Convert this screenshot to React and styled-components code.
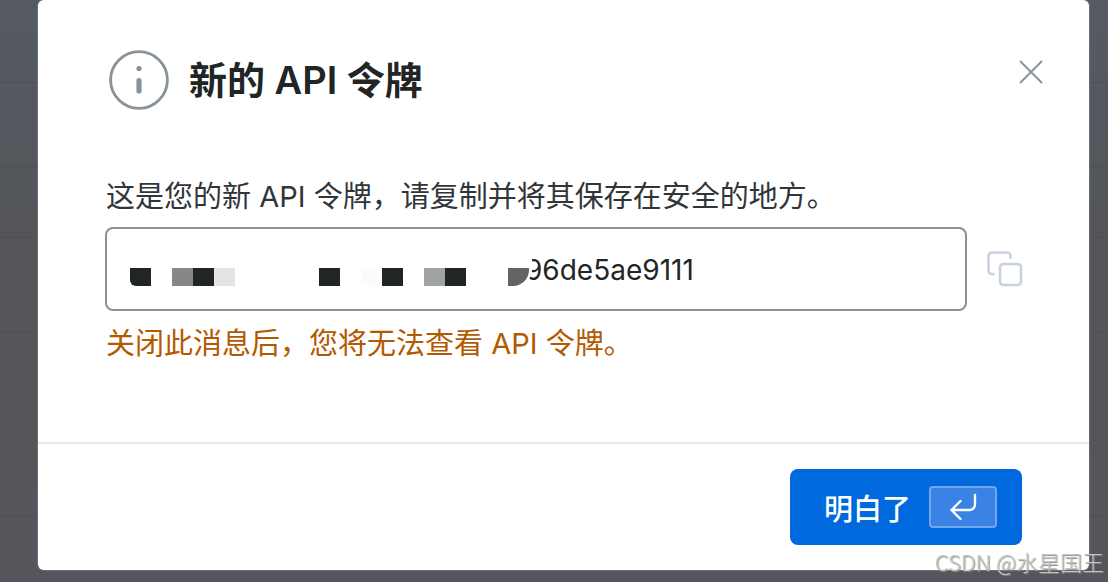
import React, { useState } from "react";
import styled, { createGlobalStyle } from "styled-components";

const rows = [83, 84, 71, 95, 183];

const blocks = [
  { col: 1, color: "#212526" },
  { col: 3, color: "#868887" },
  { col: 4, color: "#212526" },
  { col: 5, color: "#e4e4e4" },
  { col: 10, color: "#212526" },
  { col: 12, color: "#fbfbfb" },
  { col: 13, color: "#212526" },
  { col: 15, color: "#a0a3a4" },
  { col: 16, color: "#212526" },
  { col: 19, color: "#626466" },
];

function App() {
  const [open, setOpen] = useState(true);
  const token = "96de5ae9111";

  const copyToken = () => {
    navigator.clipboard?.writeText(token);
  };

  return (
    <Page>
      <GlobalStyle />
      <Backdrop aria-hidden="true">
        {rows.map((height, i) => (
          <BackdropRow key={i} $height={height} />
        ))}
      </Backdrop>
      {open && (
        <Dialog role="dialog" aria-labelledby="dialog-title">
          <Body>
            <Header>
              <InfoIcon viewBox="0 0 60 60" aria-hidden="true">
                <circle cx="30" cy="30" r="28.4" fill="none" stroke="#87929a" strokeWidth="2.8" />
                <circle cx="30" cy="18.5" r="2.6" fill="#87929a" />
                <path d="M30 30.5v10.5" stroke="#87929a" strokeWidth="5.2" strokeLinecap="round" />
              </InfoIcon>
              <Title id="dialog-title">新的 API 令牌</Title>
              <CloseButton aria-label="关闭" onClick={() => setOpen(false)}>
                <svg width="24" height="24" viewBox="0 0 24 24" aria-hidden="true">
                  <path d="M1.5 1.5l21 21M22.5 1.5l-21 21" stroke="#87929a" strokeWidth="1.8" strokeLinecap="round" />
                </svg>
              </CloseButton>
            </Header>
            <Label htmlFor="token">这是您的新 API 令牌，请复制并将其保存在安全的地方。</Label>
            <TokenRow>
              <TokenField>
                <TokenInput id="token" value={token} readOnly />
                <Mosaic aria-hidden="true">
                  {blocks.map((block) => (
                    <Block key={block.col} $col={block.col} $color={block.color} />
                  ))}
                </Mosaic>
              </TokenField>
              <CopyButton aria-label="复制" onClick={copyToken}>
                <svg width="36" height="36" viewBox="0 0 36 36" fill="none" stroke="#c8d2de" strokeWidth="2.6" strokeLinecap="round" aria-hidden="true">
                  <rect x="13" y="13" width="21" height="21" rx="3.5" />
                  <path d="M6.5 23H5a3.5 3.5 0 0 1-3.5-3.5V5A3.5 3.5 0 0 1 5 1.5h15A3.5 3.5 0 0 1 23.5 5v2" />
                </svg>
              </CopyButton>
            </TokenRow>
            <Warning>关闭此消息后，您将无法查看 API 令牌。</Warning>
          </Body>
          <Footer>
            <ConfirmButton onClick={() => setOpen(false)}>
              明白了
              <KeyHint>
                <svg width="28" height="28" viewBox="0 0 28 28" fill="none" stroke="#fff" strokeWidth="2.4" strokeLinecap="round" strokeLinejoin="round" aria-hidden="true">
                  <path d="M26 2v9.5a5.5 5.5 0 0 1-5.5 5.5H2.5M11.5 8l-9 9 9 9" />
                </svg>
              </KeyHint>
            </ConfirmButton>
          </Footer>
        </Dialog>
      )}
      <Watermark>CSDN @水星国王</Watermark>
    </Page>
  );
}

const GlobalStyle = createGlobalStyle`
  * {
    box-sizing: border-box;
  }
  body {
    margin: 0;
    background: #53565c;
    font-family: Inter, "Noto Sans CJK SC", sans-serif;
    color: #313538;
  }
  button,
  input {
    font: inherit;
    color: inherit;
  }
`;

const Page = styled.div`
  position: relative;
  min-height: 100vh;
  overflow: hidden;
`;

const Backdrop = styled.div`
  position: absolute;
  inset: 0;
  background: linear-gradient(180deg, #555a62, #535559 40%, #54565b);
`;

const BackdropRow = styled.div`
  height: ${(props) => props.$height}px;
  border-bottom: 1px solid #4c4f53;
`;

const Dialog = styled.section`
  position: relative;
  margin: 0 19px 12px 38px;
  background: #fff;
  border-radius: 6px;
  box-shadow: 0 0 2px #a5a8ab;
`;

const Body = styled.div`
  padding: 50px 46px 76px 67px;
`;

const Header = styled.header`
  display: flex;
  align-items: center;
  gap: 20px;
  margin-bottom: 65px;
`;

const InfoIcon = styled.svg`
  width: 60px;
  height: 60px;
  margin-left: 4px;
`;

const Title = styled.h1`
  flex: 1;
  margin: 0;
  color: #212526;
  font-size: 38px;
  font-weight: 600;
  line-height: 60px;
`;

const CloseButton = styled.button`
  display: flex;
  align-self: flex-start;
  margin-top: 10px;
  padding: 0;
  border: 0;
  background: none;
  cursor: pointer;
`;

const Label = styled.label`
  display: block;
  margin-bottom: 8px;
  padding-left: 1px;
  font-size: 29px;
  line-height: 44px;
`;

const TokenRow = styled.div`
  display: flex;
  align-items: center;
  gap: 20px;
  padding-right: 20px;
`;

const TokenField = styled.div`
  position: relative;
  flex: 1;
`;

const TokenInput = styled.input`
  display: block;
  width: 100%;
  height: 84px;
  padding: 2px 24px 0 418px;
  border: 2px solid #87929a;
  border-radius: 8px;
  background: #fff;
  color: #212526;
  font-size: 28px;
`;

const Mosaic = styled.div`
  position: absolute;
  top: 41px;
  left: 25px;
  display: grid;
  grid-template-columns: repeat(19, 21px);
  grid-template-rows: 18px;
  /* hides the part of the token under the last block */
  &::before {
    content: "";
    position: absolute;
    right: -3px;
    bottom: 0;
    width: 24px;
    height: 34px;
    background: #fff;
    border-bottom-right-radius: 16px;
  }
`;

const Block = styled.span`
  position: relative;
  grid-row: 1;
  grid-column: ${(props) => props.$col};
  background: ${(props) => props.$color};
  &:first-child {
    border-bottom-left-radius: 6px;
  }
  &:last-child {
    border-bottom-right-radius: 16px;
  }
`;

const CopyButton = styled.button`
  display: flex;
  padding: 0;
  border: 0;
  background: none;
  cursor: pointer;
`;

const Warning = styled.p`
  margin: 11px 0 0;
  padding-left: 1px;
  color: #b35900;
  font-size: 29px;
  line-height: 44px;
`;

const Footer = styled.footer`
  display: flex;
  justify-content: flex-end;
  padding: 25px 67px;
  border-top: 2px solid #e5e7eb;
`;

const ConfirmButton = styled.button`
  display: flex;
  align-items: center;
  gap: 18px;
  height: 76px;
  padding: 0 25px 0 34px;
  border: 0;
  border-radius: 8px;
  background: #0069de;
  color: #fff;
  font-family: "Noto Sans CJK SC", sans-serif;
  font-size: 29px;
  font-weight: 500;
  cursor: pointer;
`;

const KeyHint = styled.span`
  display: flex;
  align-items: center;
  justify-content: center;
  width: 68px;
  height: 42px;
  border: 2px solid #74a6ec;
  border-radius: 4px;
  background: #3a82e3;
`;

const Watermark = styled.div`
  position: absolute;
  right: 4px;
  bottom: 5px;
  color: #c4c4c4;
  font-family: "Noto Sans CJK SC", sans-serif;
  font-size: 22px;
  font-weight: 300;
  line-height: 32px;
  text-shadow: 1px 1px 1px #888;
`;

export default App;
